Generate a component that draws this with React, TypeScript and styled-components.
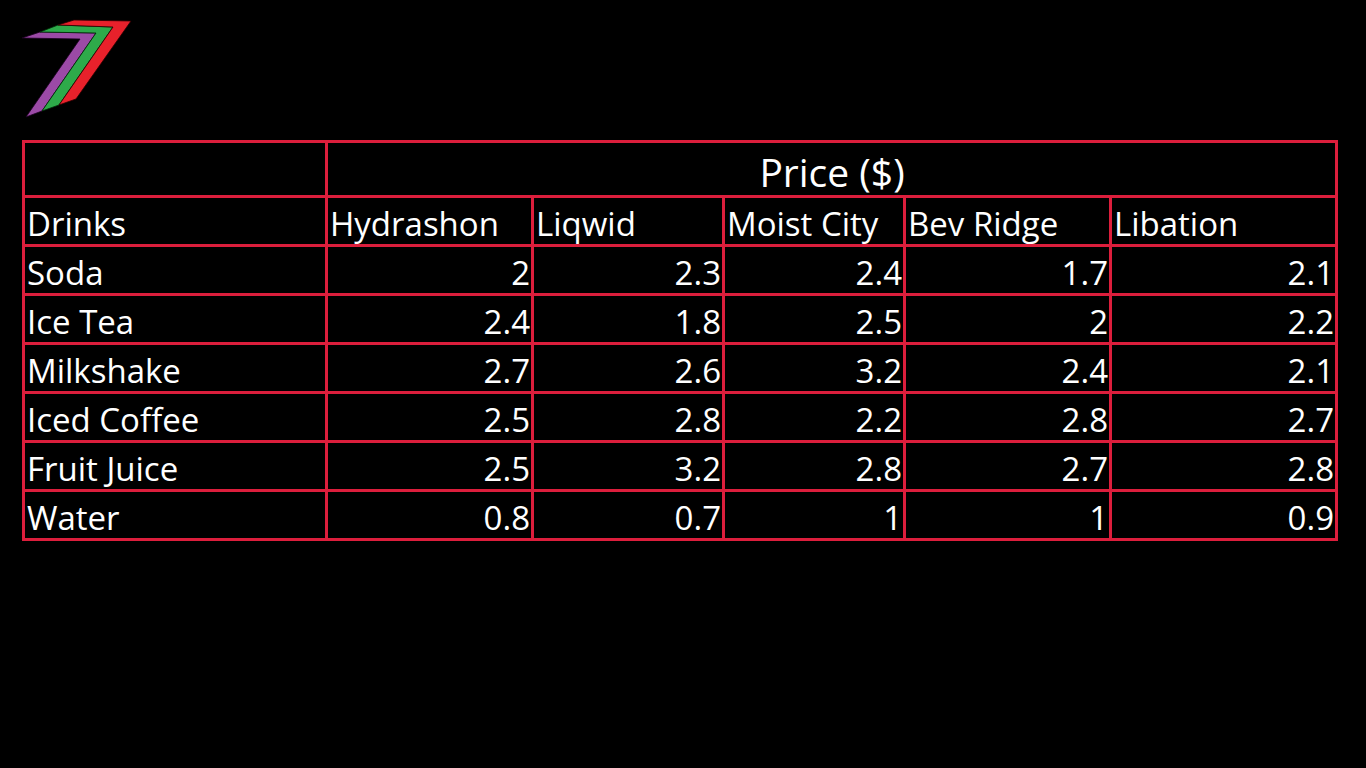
import React from 'react';
import styled, { createGlobalStyle } from 'styled-components';

const GlobalStyle = createGlobalStyle`
  html, body {
    margin: 0;
    padding: 0;
    background: #000;
  }
  body {
    width: 1366px;
    height: 768px;
    overflow: hidden;
    font-family: 'Open Sans', 'Noto Sans', sans-serif;
  }
`;

const Page = styled.div`
  display: flex;
  flex-direction: column;
  padding: 18px 0 0 22px;
  height: 768px;
  box-sizing: border-box;
  background: #000;
`;

const LogoBox = styled.div`
  height: 122px;
`;

const Table = styled.table`
  border-collapse: collapse;
  width: 1313px;
  table-layout: fixed;
  color: #fff;
  font-size: 33px;
  line-height: 1;
`;

const Cell = styled.td<{ $align?: 'left' | 'right' | 'center' }>`
  border: 3px solid #dc1e3c;
  padding: 6px 1px 2px 2px;
  height: 38px;
  text-align: ${(p) => p.$align || 'left'};
  vertical-align: middle;
  white-space: nowrap;
  overflow: hidden;
`;

const TopCell = styled(Cell)`
  height: 44px;
  padding-top: 6px;
  font-size: 39px;
`;

// three stacked "7" chevrons: purple, green, red
const Logo: React.FC = () => (
  <svg width="112" height="102" viewBox="22 18 112 102">
    <polygon
      points="22,38 40,32 96,33 42,111 26,117 80,39"
      fill="#9b4aa6"
      stroke="#1a0020"
      strokeWidth="0.8"
    />
    <polygon
      points="40,32 58,25 113,27 59,105 42,111 96,33"
      fill="#2eaa4a"
      stroke="#002a08"
      strokeWidth="0.8"
    />
    <polygon
      points="58,25 74,20 131,21 76,99 59,105 113,27"
      fill="#e8212b"
      stroke="#2a0000"
      strokeWidth="0.8"
    />
  </svg>
);

const brands = ['Hydrashon', 'Liqwid', 'Moist City', 'Bev Ridge', 'Libation'];
const widths = [303, 206, 191, 181, 206, 226];

const rows: [string, string[]][] = [
  ['Soda', ['2', '2.3', '2.4', '1.7', '2.1']],
  ['Ice Tea', ['2.4', '1.8', '2.5', '2', '2.2']],
  ['Milkshake', ['2.7', '2.6', '3.2', '2.4', '2.1']],
  ['Iced Coffee', ['2.5', '2.8', '2.2', '2.8', '2.7']],
  ['Fruit Juice', ['2.5', '3.2', '2.8', '2.7', '2.8']],
  ['Water', ['0.8', '0.7', '1', '1', '0.9']],
];

export default function App() {
  return (
    <Page>
      <GlobalStyle />
      <LogoBox>
        <Logo />
      </LogoBox>
      <Table>
        <colgroup>
          {widths.map((w, i) => (
            <col key={i} style={{ width: w }} />
          ))}
        </colgroup>
        <tbody>
          <tr>
            <TopCell />
            <TopCell colSpan={5} $align="center">
              Price ($)
            </TopCell>
          </tr>
          <tr>
            <Cell>Drinks</Cell>
            {brands.map((b) => (
              <Cell key={b}>{b}</Cell>
            ))}
          </tr>
          {rows.map(([name, vals]) => (
            <tr key={name}>
              <Cell>{name}</Cell>
              {vals.map((v, i) => (
                <Cell key={i} $align="right">
                  {v}
                </Cell>
              ))}
            </tr>
          ))}
        </tbody>
      </Table>
    </Page>
  );
}
